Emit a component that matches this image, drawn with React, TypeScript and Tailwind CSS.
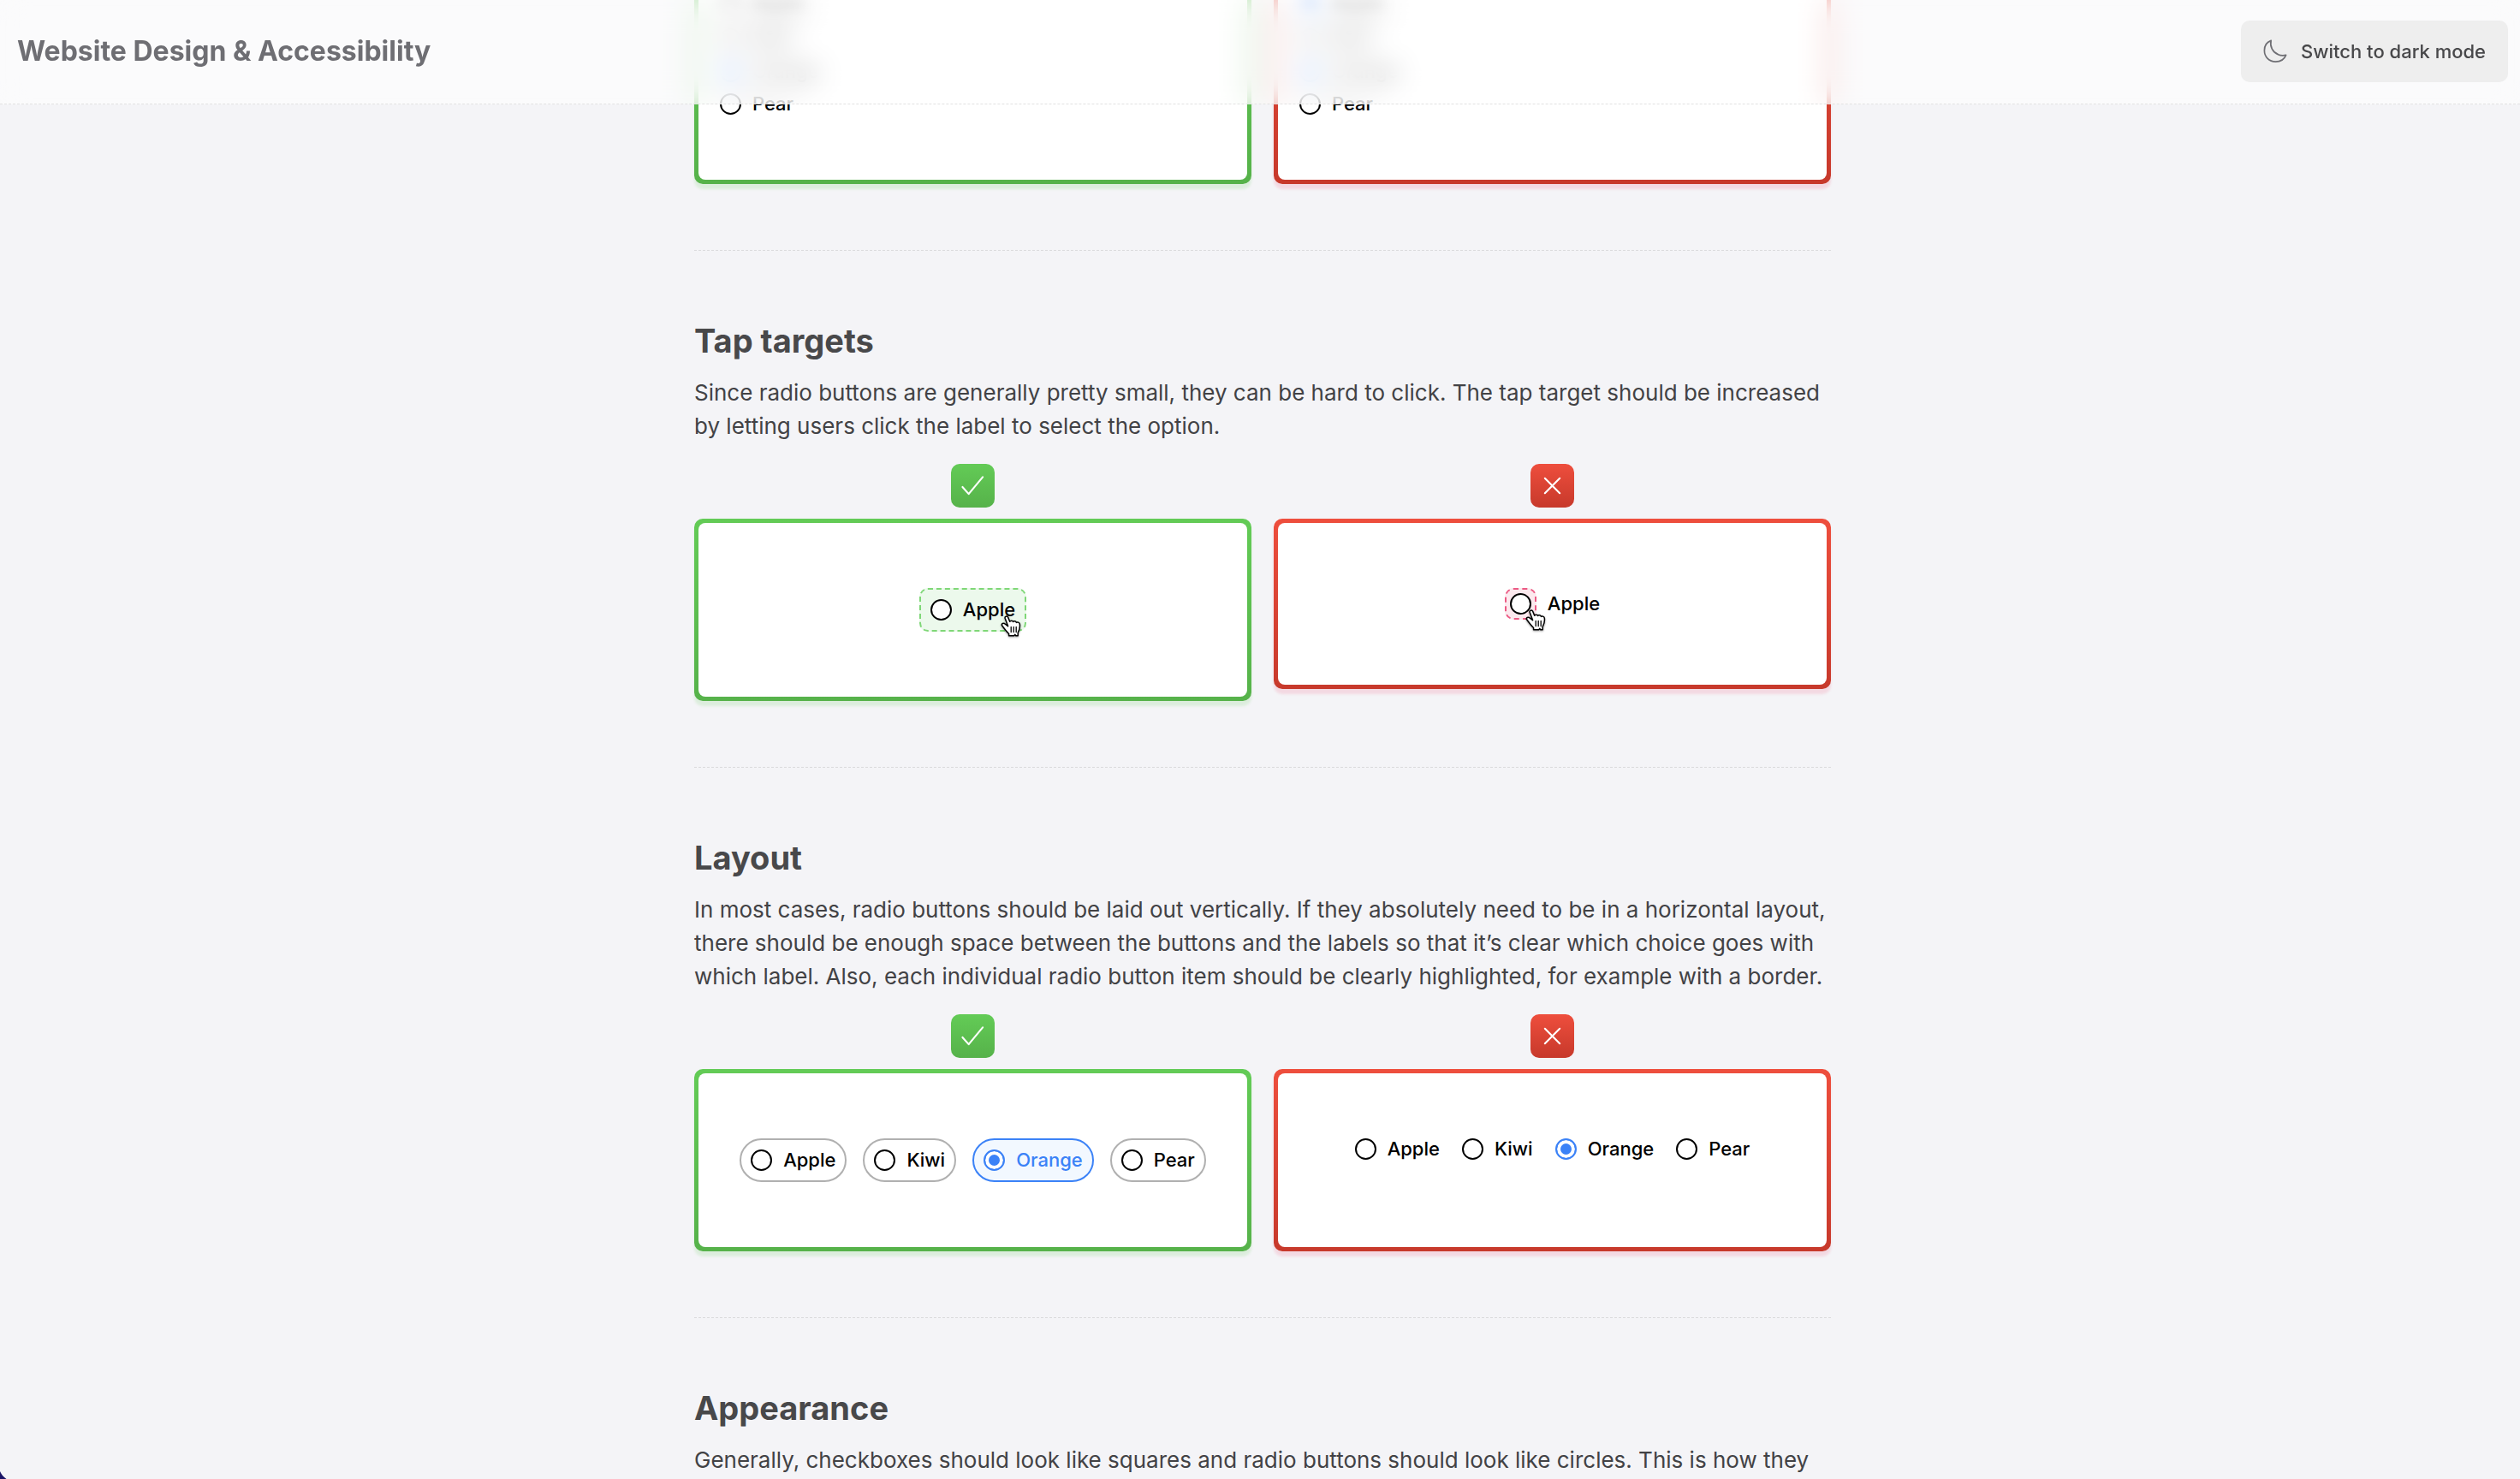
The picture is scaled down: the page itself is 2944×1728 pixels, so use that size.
import type { ReactNode } from 'react';

const FRUITS = ['Apple', 'Kiwi', 'Orange', 'Pear'];

interface RadioProps {
  name: string;
  label: string;
  checked?: boolean;
}

const RadioInput = ({ name, label, checked }: RadioProps) => (
  <input
    type="radio"
    id={`${name}-${label}`}
    name={name}
    value={label}
    defaultChecked={checked}
    className="m-0 block size-[25px] shrink-0 appearance-none rounded-full border-2 border-black bg-white checked:border-[#3b82f7] checked:bg-[#3b82f7] checked:shadow-[inset_0_0_0_4px_#fff]"
  />
);

const Radio = ({ name, label, checked }: RadioProps) => (
  <label
    htmlFor={`${name}-${label}`}
    className="flex items-center gap-[13px] text-[22px] leading-[25px] font-medium text-black"
  >
    <RadioInput name={name} label={label} checked={checked} />
    {label}
  </label>
);

const HandCursor = () => (
  <svg width="26" height="28" viewBox="0 0 26 28" fill="none" aria-hidden="true" className="drop-shadow-[0_1px_1px_rgba(0,0,0,0.4)]">
    <path
      d="M8.6 12.6 5.2 3.6C4.4 1.1 7.7.1 8.7 2.4l2 4.8c.6-1.5 3.5-1.4 3.9.2.8-1.1 3.3-.7 3.8 1 .9-1 3.6-.2 3.9 1.8.6 4-.5 7.2-2.1 10.2v3.3h-2.4l-1-1.3-1.2 1.3H9.6v-2.2C6.2 18.3 4 15.2 1.6 11.8.4 9.7 3.4 8.3 5.4 10.2Z"
      fill="#fff"
      stroke="#000"
      strokeWidth="1.5"
      strokeLinejoin="round"
    />
    <path d="M12.2 13.5v6M15.2 13.5v6M18.2 13.5v6" stroke="#000" strokeWidth="1.3" strokeLinecap="round" />
  </svg>
);

const Good = ({ children, label = true }: { children: ReactNode; label?: boolean }) => (
  <div className="flex min-w-0 flex-1 flex-col items-center gap-[13px]">
    {label && (
      <span className="flex size-[51px] items-center justify-center rounded-[10px] bg-linear-to-b from-[#63cb56] to-[#56b24a]">
        <svg width="27" height="27" viewBox="0 0 28 28" fill="none" role="img" aria-label="Do">
          <path d="M1.5 15.5 9 24 26 3.5" stroke="#fff" strokeWidth="2.2" strokeLinecap="round" strokeLinejoin="round" />
        </svg>
      </span>
    )}
    <div className="w-full rounded-[10px] bg-linear-to-b from-[#63cb56] to-[#56b24a] p-[5px] shadow-[0_6px_3px_rgba(99,203,86,0.16)]">
      <div className="rounded-[8px] bg-white px-[25px] py-[76px]">{children}</div>
    </div>
  </div>
);

const Bad = ({ children, label = true }: { children: ReactNode; label?: boolean }) => (
  <div className="flex min-w-0 flex-1 flex-col items-center gap-[13px]">
    {label && (
      <span className="flex size-[51px] items-center justify-center rounded-[10px] bg-linear-to-b from-[#ee4e3d] to-[#c7392b]">
        <svg width="27" height="27" viewBox="0 0 28 28" fill="none" role="img" aria-label="Don't">
          <path d="m5 5 18 18M23 5 5 23" stroke="#fff" strokeWidth="2.2" strokeLinecap="round" />
        </svg>
      </span>
    )}
    <div className="w-full rounded-[10px] bg-linear-to-b from-[#ee4e3d] to-[#c7392b] p-[5px] shadow-[0_6px_3px_rgba(238,60,100,0.14)]">
      <div className="rounded-[8px] bg-white px-[25px] py-[76px]">{children}</div>
    </div>
  </div>
);

interface SectionProps {
  title: string;
  text: string;
  children?: ReactNode;
}

const Section = ({ title, text, children }: SectionProps) => (
  <section className="mt-[77px] border-t border-dashed border-[#dadadc] pt-20">
    <h2 className="text-[38px] leading-[50px] font-bold text-[#48484a]">{title}</h2>
    <p className="mt-4 text-[26px] leading-[39px] text-[#424245]">{text}</p>
    {children && <div className="mt-[25px] flex items-start gap-[26px]">{children}</div>}
  </section>
);

const App = () => {
  return (
    <div className="relative h-screen overflow-hidden bg-[#f4f4f7] font-['Inter',sans-serif]">
      <header className="fixed inset-x-0 top-0 z-10 flex items-center justify-between border-b border-dashed border-[#e2e2e2] bg-white/60 pt-6 pr-3.5 pb-[25px] pl-5 backdrop-blur-[16px]">
        <h1 className="text-[32px] leading-[40px] font-bold text-[#6e6e73]">Website Design &amp; Accessibility</h1>
        <button type="button" className="flex h-[72px] items-center gap-4 rounded-[10px] bg-[#eeeeee] px-[26px] text-[22px] font-medium text-[#48484a]">
          <svg width="28" height="28" viewBox="0 0 30 30" fill="none" aria-hidden="true">
            <path
              d="M9.8 1.5C4.7 3.3 1.5 8.2 1.5 14c0 8 5.9 14 14 14 6 0 11-3.2 13-8.3-3 .7-6.8.6-9.8-.8C11.8 16 8.1 8.8 9.8 1.5Z"
              stroke="#6e6e73"
              strokeWidth="1.8"
              strokeLinejoin="round"
            />
          </svg>
          Switch to dark mode
        </button>
      </header>

      {/* Page is scrolled part-way through the radio button guidelines */}
      <main className="-mt-[86px] pl-1.5">
        <div className="mx-auto max-w-[1328px]">
          <div className="flex items-start gap-[26px]">
            <Good label={false}>
              <div className="flex flex-col items-start gap-[13px] [&>label:first-child]:blur-[8px]">
                {FRUITS.map((fruit) => (
                  <Radio key={fruit} name="single" label={fruit} checked={fruit === 'Orange'} />
                ))}
              </div>
            </Good>
            <Bad label={false}>
              <div className="flex flex-col items-start gap-[13px] [&>label:first-child]:blur-[8px]">
                {FRUITS.map((fruit) => (
                  <Radio key={fruit} name={`multi-${fruit}`} label={fruit} checked={fruit === 'Apple' || fruit === 'Orange'} />
                ))}
              </div>
            </Bad>
          </div>

          <Section
            title="Tap targets"
            text="Since radio buttons are generally pretty small, they can be hard to click. The tap target should be increased by letting users click the label to select the option."
          >
            <Good>
              <div className="flex justify-center">
                <div className="relative rounded-[10px] border-2 border-dashed border-[#7fd777] bg-[#ecf9ec] p-[11px]">
                  <Radio name="tap-good" label="Apple" />
                  <span className="absolute top-[30px] left-[93px]">
                    <HandCursor />
                  </span>
                </div>
              </div>
            </Good>
            <Bad>
              <div className="flex items-center justify-center gap-[13px]">
                <div className="relative rounded-[10px] border-2 border-dashed border-[#ec5a84] bg-[#fce9ee] p-1">
                  <RadioInput name="tap-bad" label="Apple" />
                  <span className="absolute top-[23px] left-[22px]">
                    <HandCursor />
                  </span>
                </div>
                <label htmlFor="tap-bad-Apple" className="text-[22px] leading-[25px] font-medium text-black">
                  Apple
                </label>
              </div>
            </Bad>
          </Section>

          <Section
            title="Layout"
            text="In most cases, radio buttons should be laid out vertically. If they absolutely need to be in a horizontal layout, there should be enough space between the buttons and the labels so that it’s clear which choice goes with which label. Also, each individual radio button item should be clearly highlighted, for example with a border."
          >
            <Good>
              <div className="flex justify-center gap-[19px]">
                {FRUITS.map((fruit) => (
                  <div
                    key={fruit}
                    className="rounded-full border-2 border-[#b0b0b0] p-[11px] has-checked:border-[#3b82f7] has-checked:bg-[#f2f8ff] has-checked:[&>label]:text-[#3b82f7]"
                  >
                    <Radio name="layout-good" label={fruit} checked={fruit === 'Orange'} />
                  </div>
                ))}
              </div>
            </Good>
            <Bad>
              <div className="flex justify-center gap-[26px] pb-[26px]">
                {FRUITS.map((fruit) => (
                  <Radio key={fruit} name="layout-bad" label={fruit} checked={fruit === 'Orange'} />
                ))}
              </div>
            </Bad>
          </Section>

          <Section
            title="Appearance"
            text="Generally, checkboxes should look like squares and radio buttons should look like circles. This is how they"
          />
        </div>
      </main>

      {/* Window corner */}
      <svg width="8" height="9" viewBox="0 0 8 9" aria-hidden="true" className="absolute bottom-0 left-0">
        <path d="M0 0C1.5 3.5 4 6.5 7.5 9H0Z" fill="#1a1466" />
      </svg>
    </div>
  );
};

export default App;
